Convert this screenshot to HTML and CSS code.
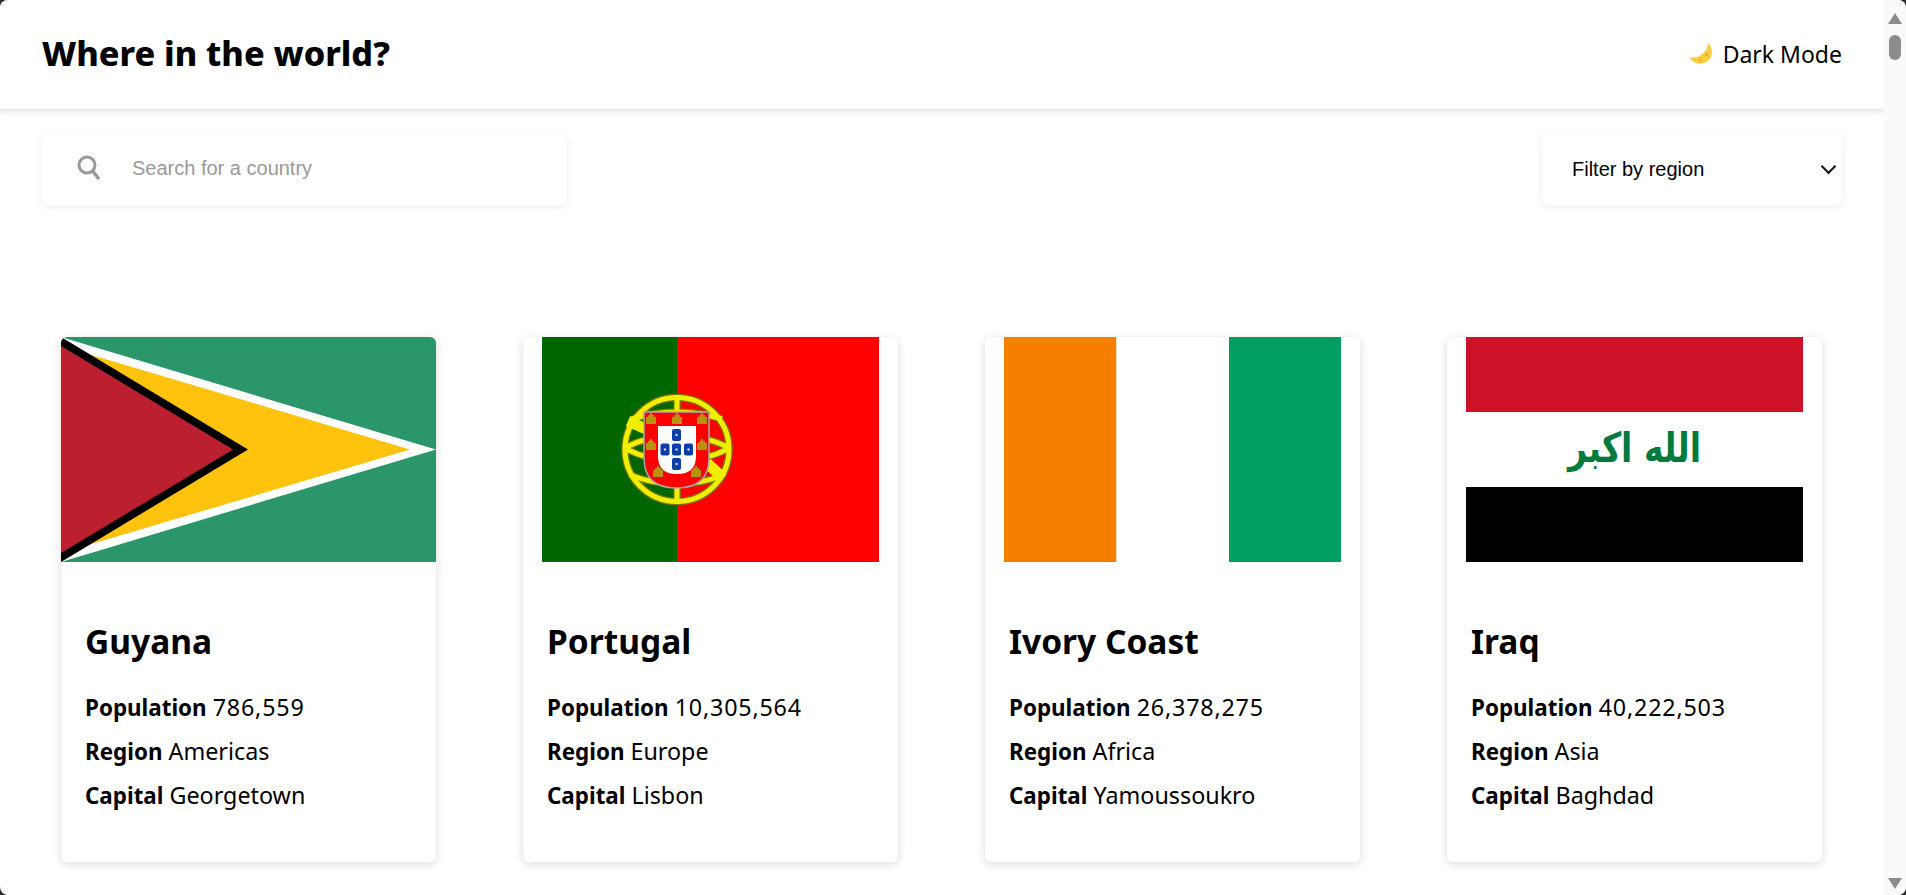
FILE: index.html
```html
<!DOCTYPE html>
<html lang="en">
<head>
  <meta charset="UTF-8">
  <title>Where in the world?</title>
  <link rel="stylesheet" href="styles.css">
</head>
<body>
  <div class="window">
    <div class="page">
      <header class="topbar">
        <h1>Where in the world?</h1>
        <button class="mode-toggle">
          <svg class="moon" viewBox="0 0 24 24" width="24" height="24">
            <path d="M18.500 .5C20 8 12 17 .5 15.500C4 22 14 24 20 18C24.500 13 23.500 4.500 18.500 .5z" fill="#fccb3f"/>
            <circle cx="17.500" cy="12.500" r="1.800" fill="#f2ad2f"/>
            <circle cx="11.500" cy="18" r="1.500" fill="#f2ad2f"/>
          </svg>
          <span>Dark Mode</span>
        </button>
      </header>

      <main>
        <div class="controls">
          <label class="search">
            <svg viewBox="0 0 24 24" width="24" height="26">
              <circle cx="10" cy="10" r="8" fill="none" stroke="#999" stroke-width="3"/>
              <path d="M15.500 16l6.500 8" stroke="#999" stroke-width="3.500" fill="none"/>
            </svg>
            <input type="text" placeholder="Search for a country">
          </label>
          <div class="region-wrap">
            <select class="region">
              <option>Filter by region</option>
              <option>Africa</option>
              <option>Americas</option>
              <option>Asia</option>
              <option>Europe</option>
              <option>Oceania</option>
            </select>
          </div>
        </div>

        <section class="countries">
          <article class="card">
            <div class="flag">
              <svg viewBox="0 0 375 225" width="375" height="225">
                <rect width="375" height="225" fill="#2b9669"/>
                <path d="M0 0L375 112.500L0 225z" fill="#fff"/>
                <path d="M0 9L349 112.500L0 216z" fill="#ffc30d"/>
                <path d="M0 0L187 112.500L0 225z" fill="#000"/>
                <path d="M0 9L172 112.500L0 216z" fill="#bc1f2f"/>
              </svg>
            </div>
            <div class="info">
              <h2>Guyana</h2>
              <p><b>Population</b> <span class="count">786,559</span></p>
              <p><b>Region</b> Americas</p>
              <p><b>Capital</b> Georgetown</p>
            </div>
          </article>

          <article class="card">
            <div class="flag">
              <svg viewBox="0 0 337 225" width="337" height="225">
                <rect width="135" height="225" fill="#060"/>
                <rect x="135" width="202" height="225" fill="#f00"/>
                <g fill="none" stroke="#77770a" stroke-width="7.500">
                  <circle cx="135" cy="112.500" r="52"/>
                  <path d="M82 111Q135 85 188 111M82 111Q135 138 188 111M90 82Q135 68 180 82M88 138Q135 156 182 138M135 58v109"/>
                </g>
                <g fill="none" stroke="#f2ee00" stroke-width="5">
                  <circle cx="135" cy="112.500" r="52"/>
                  <path d="M82 111Q135 85 188 111M82 111Q135 138 188 111M90 82Q135 68 180 82M88 138Q135 156 182 138M135 58v109"/>
                </g>
                <path d="M86 84L104 92M165 126L181 141" stroke="#f2ee00" stroke-width="11" fill="none"/>
                <path d="M102 75h65v46q0 30-32.500 30t-32.500-30z" fill="#f00" stroke="#a9a9a9" stroke-width="1.500"/>
                <path d="M116 89h38v30q0 18-19 18t-19-18z" fill="#fff"/>
                <g fill="#0b3ea8">
                  <rect x="130" y="92" width="9" height="12" rx="2"/>
                  <rect x="118.500" y="106.500" width="9" height="12" rx="2"/>
                  <rect x="130" y="106.500" width="9" height="12" rx="2"/>
                  <rect x="142" y="106.500" width="9" height="12" rx="2"/>
                  <rect x="130" y="121" width="9" height="12" rx="2"/>
                </g>
                <g fill="#fff" opacity=".8">
                  <circle cx="134.500" cy="98" r="1.200"/>
                  <circle cx="123" cy="112.500" r="1.200"/>
                  <circle cx="134.500" cy="112.500" r="1.200"/>
                  <circle cx="146.500" cy="112.500" r="1.200"/>
                  <circle cx="134.500" cy="127" r="1.200"/>
                </g>
                <g fill="#b8920e">
                  <path d="M104 87v-7h2v-2h2v-2h2v2h2v2h2v7z"/>
                  <path d="M130 87v-7h2v-2h2v-2h2v2h2v2h2v7z"/>
                  <path d="M155 87v-7h2v-2h2v-2h2v2h2v2h2v7z"/>
                  <path d="M104 113v-7h2v-2h2v-2h2v2h2v2h2v7z"/>
                  <path d="M155 113v-7h2v-2h2v-2h2v2h2v2h2v7z"/>
                  <path d="M111 140v-7h2v-2h2v-2h2v2h2v2h2v7z"/>
                  <path d="M149 140v-7h2v-2h2v-2h2v2h2v2h2v7z"/>
                </g>
              </svg>
            </div>
            <div class="info">
              <h2>Portugal</h2>
              <p><b>Population</b> <span class="count">10,305,564</span></p>
              <p><b>Region</b> Europe</p>
              <p><b>Capital</b> Lisbon</p>
            </div>
          </article>

          <article class="card">
            <div class="flag">
              <svg viewBox="0 0 337 225" width="337" height="225">
                <rect width="112.500" height="225" fill="#f77f00"/>
                <rect x="112.500" width="112.500" height="225" fill="#fff"/>
                <rect x="225" width="112" height="225" fill="#009e60"/>
              </svg>
            </div>
            <div class="info">
              <h2>Ivory Coast</h2>
              <p><b>Population</b> <span class="count">26,378,275</span></p>
              <p><b>Region</b> Africa</p>
              <p><b>Capital</b> Yamoussoukro</p>
            </div>
          </article>

          <article class="card">
            <div class="flag">
              <svg viewBox="0 0 337 225" width="337" height="225">
                <rect width="337" height="75" fill="#ce1126"/>
                <rect y="75" width="337" height="75" fill="#fff"/>
                <rect y="150" width="337" height="75" fill="#000"/>
                <text class="takbir" text-anchor="middle" transform="translate(168.500 125) scale(1 1.250)">الله اكبر</text>
              </svg>
            </div>
            <div class="info">
              <h2>Iraq</h2>
              <p><b>Population</b> <span class="count">40,222,503</span></p>
              <p><b>Region</b> Asia</p>
              <p><b>Capital</b> Baghdad</p>
            </div>
          </article>
        </section>
      </main>
    </div>

    <div class="scrollbar">
      <span class="arrow-up"></span>
      <span class="thumb"></span>
      <span class="arrow-down"></span>
    </div>
  </div>
</body>
</html>
```

FILE: styles.css
```css
* {
  box-sizing: border-box;
}
html, body {
  height: 100%;
}
body {
  margin: 0;
  background-color: #2e2e2e;
  font-family: "Noto Sans", Arial, sans-serif;
  color: #000;
  overflow: hidden;
}
.window {
  display: flex;
  height: 895px;
  background-color: #fff;
  border-radius: 8px;
  overflow: hidden;
}
.page {
  flex: 1;
  min-width: 0;
}
.topbar {
  display: flex;
  justify-content: space-between;
  align-items: center;
  height: 109px;
  padding: 0 42px 4px 42px;
  background-color: #fff;
  box-shadow: 0 2px 6px rgba(0, 0, 0, 0.14);
}
.topbar h1 {
  margin: 0;
  font-size: 34.200px;
  font-weight: 800;
}
.mode-toggle {
  display: flex;
  align-items: center;
  gap: 10px;
  padding: 3px 0 0 0;
  border: none;
  background: none;
  font-family: inherit;
  font-size: 23px;
  color: #000;
  cursor: pointer;
}
.moon {
  display: block;
}
main {
  padding: 24px 42px 0 42px;
}
.controls {
  display: flex;
  justify-content: space-between;
}
.search {
  display: flex;
  align-items: center;
  gap: 29px;
  width: 525px;
  height: 72px;
  padding-left: 35px;
  background-color: #fff;
  border-radius: 6px;
  box-shadow: 0 2px 9px rgba(0, 0, 0, 0.07);
}
.search svg {
  margin-top: -4px;
}
.search input {
  flex: 1;
  min-width: 0;
  margin-top: -2px;
  border: none;
  outline: none;
  font-family: "Liberation Sans", Arial, sans-serif;
  font-size: 20px;
}
.search input::placeholder {
  color: #999;
}
.region-wrap {
  position: relative;
  width: 300px;
  height: 72px;
}
.region-wrap::after {
  content: "";
  position: absolute;
  top: 28px;
  right: 8px;
  width: 9px;
  height: 9px;
  border-right: 2px solid #111;
  border-bottom: 2px solid #111;
  transform: rotate(45deg);
  pointer-events: none;
}
.region {
  width: 100%;
  height: 100%;
  padding: 0 0 0 30px;
  border: none;
  border-radius: 6px;
  outline: none;
  appearance: none;
  background-color: #fff;
  font-family: "Liberation Sans", Arial, sans-serif;
  font-size: 20px;
  color: #000;
  box-shadow: 0 2px 9px rgba(0, 0, 0, 0.07);
}
.countries {
  display: grid;
  grid-template-columns: repeat(4, 375px);
  gap: 87px;
  margin-top: 132px;
  padding-left: 19px;
}
.card {
  height: 525px;
  background-color: #fff;
  border-radius: 6px;
  overflow: hidden;
  box-shadow: 0 2px 10px rgba(0, 0, 0, 0.15);
}
.flag {
  display: flex;
  justify-content: center;
  height: 225px;
}
.flag svg {
  display: block;
}
.takbir {
  font-family: "DejaVu Sans", sans-serif;
  font-size: 33px;
  font-weight: bold;
  fill: #007a3d;
}
.info {
  padding: 53px 25px 0 24px;
}
.info h2 {
  margin: 0 0 18px 0;
  font-size: 33.500px;
  font-weight: 700;
  line-height: 52px;
}
.info p {
  margin: 0;
  font-size: 23.300px;
  line-height: 44px;
}
.info b {
  font-size: 22.400px;
  font-weight: 700;
  line-height: 1;
}
.count {
  letter-spacing: 0.8px;
}
.scrollbar {
  position: relative;
  width: 22px;
  flex-shrink: 0;
  background-color: #fafafa;
}
.thumb {
  position: absolute;
  top: 35px;
  left: 5px;
  width: 12px;
  height: 25px;
  background-color: #8c8c8c;
  border-radius: 6px;
}
.arrow-up, .arrow-down {
  position: absolute;
  left: 4px;
  width: 0;
  height: 0;
  border-left: 7px solid transparent;
  border-right: 7px solid transparent;
}
.arrow-up {
  top: 13px;
  border-bottom: 11px solid #8c8c8c;
}
.arrow-down {
  bottom: 6px;
  border-top: 11px solid #8c8c8c;
}
```
